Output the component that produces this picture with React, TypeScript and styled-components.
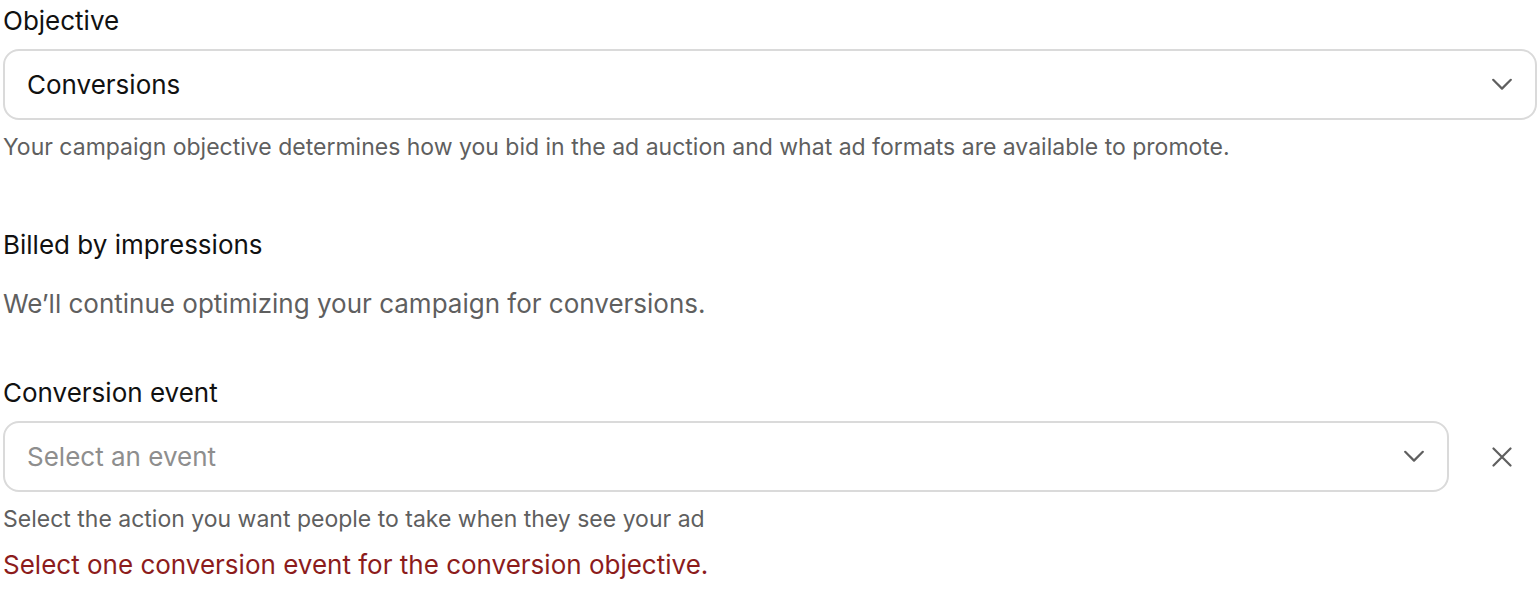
import React from 'react';
import styled, { createGlobalStyle } from 'styled-components';

const GlobalStyle = createGlobalStyle`
  html, body {
    margin: 0;
    padding: 0;
    background: #ffffff;
  }
  body {
    font-family: 'Inter', 'Liberation Sans', sans-serif;
    color: #111111;
  }
`;

const Page = styled.main`
  width: 1538px;
  padding: 6px 1px 0 3px;
  box-sizing: border-box;
  display: flex;
  flex-direction: column;
`;

const Field = styled.section<{ $gap?: number }>`
  display: flex;
  flex-direction: column;
  margin-bottom: ${(p) => p.$gap ?? 0}px;
`;

const Label = styled.div`
  font-size: 26px;
  line-height: 30px;
  color: #111111;
  margin-bottom: 13px;
`;

const Row = styled.div`
  display: flex;
  align-items: center;
`;

const Select = styled.div<{ $placeholder?: boolean }>`
  flex: 1 1 auto;
  height: 71px;
  box-sizing: border-box;
  border: 2px solid #dadada;
  border-radius: 16px;
  display: flex;
  align-items: center;
  justify-content: space-between;
  padding: 0 23px 0 22px;
  font-size: 26px;
  color: ${(p) => (p.$placeholder ? '#8e8e8e' : '#111111')};
`;

const IconButton = styled.button`
  width: 40px;
  height: 40px;
  margin: 0 15px 0 33px;
  border: none;
  background: none;
  display: flex;
  align-items: center;
  justify-content: center;
  padding: 0;
  color: #5f5f5f;
`;

const Help = styled.div`
  font-size: 23px;
  line-height: 28px;
  color: #5f5f5f;
  margin-top: 13px;
`;

const Heading = styled.div`
  font-size: 26px;
  line-height: 30px;
  color: #111111;
  margin-bottom: 29px;
`;

const Body = styled.div`
  font-size: 26px;
  line-height: 30px;
  color: #5f5f5f;
`;

const ErrorText = styled.div`
  font-size: 26px;
  line-height: 32px;
  color: #8c1c1c;
  margin-top: 16px;
`;

const Chevron = () => (
  <svg width="20" height="13" viewBox="0 0 20 13" fill="none">
    <path d="M1.2 1.8 L10 10.6 L18.8 1.8" stroke="#5f5f5f" strokeWidth="2.2" strokeLinecap="round" strokeLinejoin="round" />
  </svg>
);

const Cross = () => (
  <svg width="20" height="20" viewBox="0 0 20 20" fill="none">
    <path d="M1.5 1.5 L18.5 18.5 M18.5 1.5 L1.5 18.5" stroke="#5f5f5f" strokeWidth="2.2" strokeLinecap="round" />
  </svg>
);

export default function App() {
  return (
    <>
      <GlobalStyle />
      <Page>
        <Field $gap={69}>
          <Label>Objective</Label>
          <Row>
            <Select>
              <span>Conversions</span>
              <Chevron />
            </Select>
          </Row>
          <Help>
            Your campaign objective determines how you bid in the ad auction and what ad formats are available to promote.
          </Help>
        </Field>
        <Field $gap={59}>
          <Heading>Billed by impressions</Heading>
          <Body>We’ll continue optimizing your campaign for conversions.</Body>
        </Field>
        <Field>
          <Label>Conversion event</Label>
          <Row>
            <Select $placeholder>
              <span>Select an event</span>
              <Chevron />
            </Select>
            <IconButton aria-label="Clear">
              <Cross />
            </IconButton>
          </Row>
          <Help>Select the action you want people to take when they see your ad</Help>
          <ErrorText>Select one conversion event for the conversion objective.</ErrorText>
        </Field>
      </Page>
    </>
  );
}
